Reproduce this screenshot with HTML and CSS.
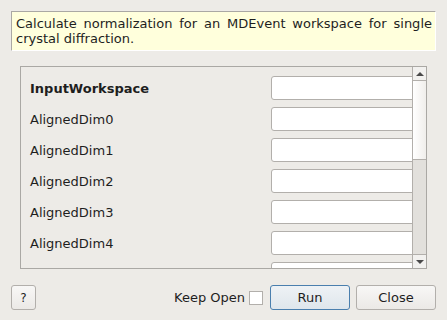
FILE: index.html
```html
<!DOCTYPE html>
<html lang="en">
<head>
    <meta charset="UTF-8">
    <title>ConvertToMDMinMaxGlobal</title>
    <link rel="stylesheet" href="styles.css">
</head>
<body>
    <div class="dialog">
        <div class="description">
            Calculate normalization for an MDEvent workspace for single crystal diffraction.
        </div>

        <div class="props-frame">
            <div class="props-view">
                <div class="prop-row">
                    <label class="prop-label mandatory">InputWorkspace</label>
                    <input class="prop-input" type="text">
                </div>
                <div class="prop-row">
                    <label class="prop-label">AlignedDim0</label>
                    <input class="prop-input" type="text">
                </div>
                <div class="prop-row">
                    <label class="prop-label">AlignedDim1</label>
                    <input class="prop-input" type="text">
                </div>
                <div class="prop-row">
                    <label class="prop-label">AlignedDim2</label>
                    <input class="prop-input" type="text">
                </div>
                <div class="prop-row">
                    <label class="prop-label">AlignedDim3</label>
                    <input class="prop-input" type="text">
                </div>
                <div class="prop-row">
                    <label class="prop-label">AlignedDim4</label>
                    <input class="prop-input" type="text">
                </div>
                <!-- next row is scrolled mostly out of view -->
                <div class="prop-row">
                    <label class="prop-label"></label>
                    <input class="prop-input" type="text">
                </div>
            </div>
            <div class="scrollbar">
                <div class="scroll-btn"><span class="arrow-up"></span></div>
                <div class="scroll-handle"></div>
                <div class="scroll-track"></div>
                <div class="scroll-btn bottom"><span class="arrow-down"></span></div>
            </div>
        </div>

        <div class="button-bar">
            <button class="btn btn-help">?</button>
            <div class="spacer"></div>
            <label class="keep-open">Keep Open <span class="checkbox"></span></label>
            <button class="btn btn-run">Run</button>
            <button class="btn btn-close">Close</button>
        </div>
    </div>
</body>
</html>
```

FILE: styles.css
```css
body {
    margin: 0;
    background: #edebe7;
    font-family: "DejaVu Sans", sans-serif;
    font-size: 13px;
    color: #1e1e1e;
}
.dialog {
    width: 447px;
    height: 320px;
    display: flex;
    flex-direction: column;
}
.description {
    margin: 11px 11px 0 11px;
    padding: 4px 3px 4px 4px;
    line-height: 15px;
    background: #ffffdc;
    border-top: 1px solid #aaa8a4;
    border-left: 1px solid #aaa8a4;
    border-right: 1px solid #ffffff;
    border-bottom: 1px solid #ffffff;
    text-align: justify;
}
.props-frame {
    margin: 15px 20px 0 20px;
    height: 201px;
    border: 1px solid #aaa8a4;
    display: flex;
}
.props-view {
    flex: 1;
    overflow: hidden;
    padding: 9px 0 0 9px;
}
.prop-row {
    display: flex;
    align-items: center;
    height: 24px;
    margin-bottom: 7px;
}
.prop-label {
    width: 241px;
    flex-shrink: 0;
}
.mandatory {
    font-weight: bold;
}
.prop-input {
    flex-shrink: 0;
    width: 160px;
    height: 24px;
    box-sizing: border-box;
    margin: 0;
    border: 1px solid #b2afab;
    border-radius: 3px;
    background: #ffffff;
    font: inherit;
}
.scrollbar {
    width: 13px;
    border-left: 1px solid #b2afab;
    display: flex;
    flex-direction: column;
}
.scroll-btn {
    height: 13px;
    border-bottom: 1px solid #b2afab;
    background: #f2f1ef;
    display: flex;
    align-items: center;
    justify-content: center;
}
.scroll-btn.bottom {
    border-bottom: none;
    border-top: 1px solid #b2afab;
}
.arrow-up {
    width: 0;
    height: 0;
    border-left: 4px solid transparent;
    border-right: 4px solid transparent;
    border-bottom: 4px solid #4a4a4a;
}
.arrow-down {
    width: 0;
    height: 0;
    border-left: 4px solid transparent;
    border-right: 4px solid transparent;
    border-top: 4px solid #4a4a4a;
}
.scroll-handle {
    height: 78px;
    border-bottom: 1px solid #b2afab;
    background: linear-gradient(to right, #ffffff, #f0eeeb);
}
.scroll-track {
    flex: 1;
    background: #e2e0dc;
}
.button-bar {
    display: flex;
    align-items: center;
    margin: 16px 11px 0 11px;
    height: 25px;
}
.spacer {
    flex: 1;
}
.btn {
    height: 25px;
    box-sizing: border-box;
    margin: 0;
    padding: 0;
    border: 1px solid #b2afab;
    border-radius: 3px;
    background: linear-gradient(#f8f7f6, #ebe9e6);
    font: inherit;
    color: #1e1e1e;
}
.btn-help {
    width: 25px;
    font-size: 12px;
}
.keep-open {
    display: flex;
    align-items: center;
    margin-right: 7px;
}
.checkbox {
    display: inline-block;
    width: 14px;
    height: 14px;
    box-sizing: border-box;
    margin-left: 4px;
    border: 1px solid #b2afab;
    background: #ffffff;
}
.btn-run {
    width: 80px;
    margin-right: 6px;
    border-color: #4a7fae;
    background: linear-gradient(#eef2f5, #dfe6ec);
}
.btn-close {
    width: 80px;
}
```
